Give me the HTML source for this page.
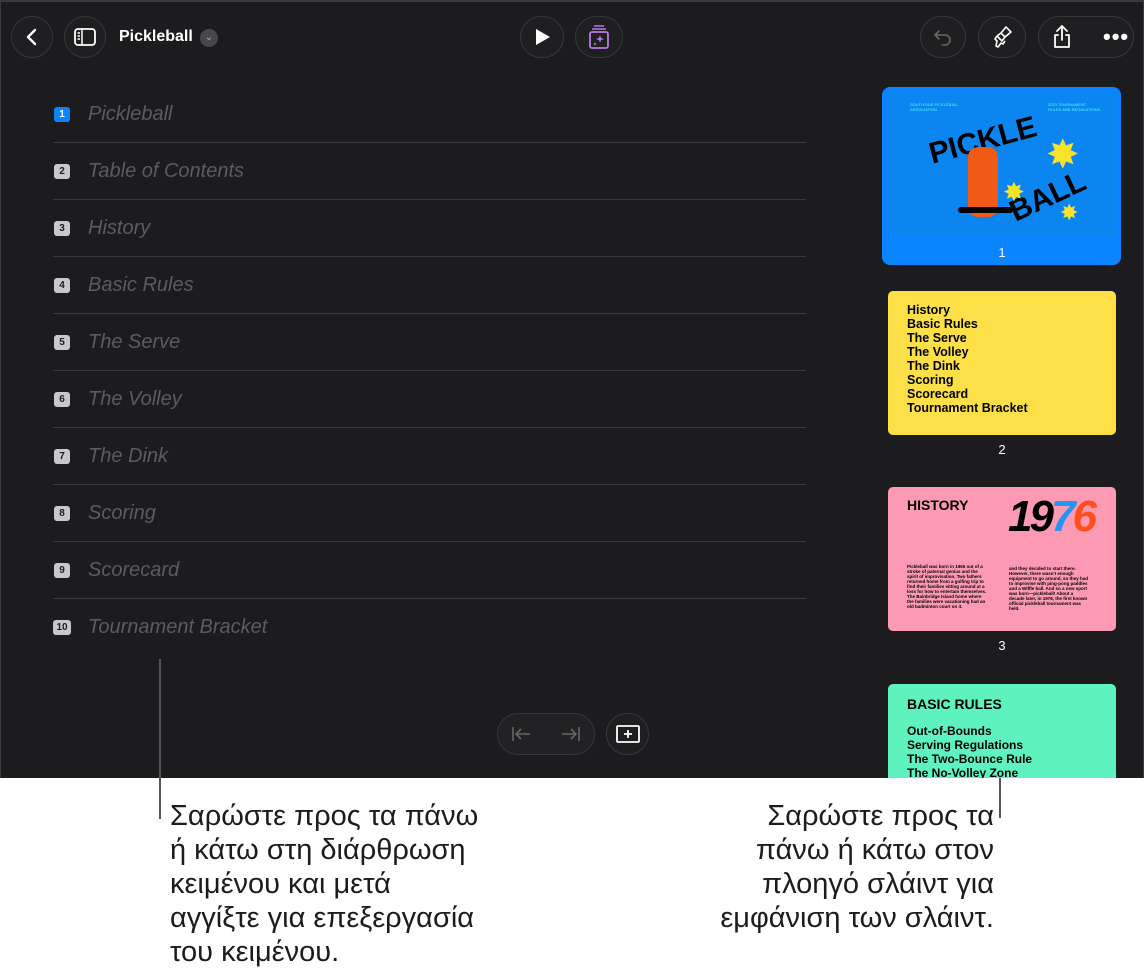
<!DOCTYPE html>
<html><head><meta charset="utf-8"><style>
*{margin:0;padding:0;box-sizing:border-box}
body{width:1144px;height:979px;background:#fff;position:relative;overflow:hidden;font-family:"Liberation Sans",sans-serif}
.scr{position:absolute;left:0;top:0;width:1144px;height:778px;background:#1c1c1e;border-top:2px solid #3a3a3c;border-left:1px solid #3a3a3c;border-right:1px solid #3a3a3c;overflow:hidden}
.btn{position:absolute;height:42px;border-radius:21px;background:#1f1f21;border:1px solid #38383a;display:flex;align-items:center;justify-content:center}
.row{position:absolute;left:52px;width:753px;height:57px;border-bottom:1px solid #3a3a3c}
.bd{position:absolute;left:1px;top:21px;width:16px;height:15px;border-radius:3px;background:#c7c7cc;color:#1c1c1e;font-size:10px;font-weight:bold;text-align:center;line-height:15px}
.rt{position:absolute;left:35px;top:17px;font-size:20px;font-style:italic;color:#5b5b60}
.sl{position:absolute;left:887px;width:228px;height:144px;border-radius:5px;overflow:hidden}
.num{position:absolute;width:228px;left:887px;text-align:center;color:#fff;font-size:13px}
.cap{position:absolute;font-size:29px;line-height:34px;color:#1c1c1e;font-family:"Liberation Sans","DejaVu Sans",sans-serif;white-space:nowrap}
.ln{position:absolute;width:2px;background:#555}
</style></head><body>
<div class="scr">
<div class="btn" style="left:10px;top:14px;width:42px"><svg width="20" height="20" viewBox="0 0 20 20"><path d="M13 3 6 10l7 7" fill="none" stroke="#fff" stroke-width="2.4" stroke-linecap="round" stroke-linejoin="round"/></svg></div>
<div class="btn" style="left:63px;top:14px;width:42px"><svg width="24" height="20" viewBox="0 0 24 20"><rect x="2" y="2" width="20" height="16" rx="3" fill="none" stroke="#fff" stroke-width="1.8"/><path d="M9 2v16M4.5 6h2.5M4.5 9h2.5M4.5 12h2.5" stroke="#fff" stroke-width="1.5"/></svg></div>
<div style="position:absolute;left:118px;top:26px;color:#fff;font-weight:bold;font-size:16px">Pickleball</div>
<div style="position:absolute;left:199px;top:27px;width:18px;height:18px;border-radius:9px;background:#48484a;color:#aaa;font-size:10px;text-align:center;line-height:18px">⌄</div>
<div class="btn" style="left:519px;top:14px;width:44px"><svg width="18" height="20" viewBox="0 0 18 20"><path d="M3 2v16l14-8z" fill="#fff"/></svg></div>
<div class="btn" style="left:574px;top:14px;width:48px"><svg width="22" height="26" viewBox="0 0 22 26"><path d="M6 2h10M4 5h14" stroke="#b57be6" stroke-width="1.4"/><rect x="2" y="8" width="18" height="16" rx="2" fill="none" stroke="#b57be6" stroke-width="1.8"/><path d="M12 11l1 3 3 1-3 1-1 3-1-3-3-1 3-1z M7 18l.5 1.5 1.5.5-1.5.5L7 22l-.5-1.5L5 20l1.5-.5z" fill="#b57be6"/></svg></div>
<div class="btn" style="left:919px;top:14px;width:46px"><svg width="22" height="20" viewBox="0 0 22 20"><path d="M7 4 3 8l4 4M3 8h10a5 5 0 0 1 0 10h-3" fill="none" stroke="#666" stroke-width="1.6" stroke-linecap="round"/></svg></div>
<div class="btn" style="left:977px;top:14px;width:48px"><svg width="22" height="24" viewBox="0 0 22 24"><path d="M15 2l5 5-6 5-4-4z M10 8l-4 3 5 5 3-4 M6 11l-2 3 2 2-1 5 2 1 3-4 2 1 2-3" fill="none" stroke="#fff" stroke-width="1.6" stroke-linejoin="round"/></svg></div>
<div class="btn" style="left:1037px;top:14px;width:96px;justify-content:flex-start;padding-left:12px"><svg width="22" height="26" viewBox="0 0 22 26"><path d="M11 2v14M6 7l5-5 5 5M7 11H4v12h14V11h-3" fill="none" stroke="#fff" stroke-width="1.8" stroke-linecap="round" stroke-linejoin="round"/></svg><span style="margin-left:30px;color:#fff;font-size:22px;letter-spacing:1px;font-weight:bold;line-height:10px">•••</span></div>

<div class="row" style="top:84px"><div class="bd" style="background:#0a84ff;color:#fff">1</div><div class="rt">Pickleball</div></div>
<div class="row" style="top:141px"><div class="bd">2</div><div class="rt">Table of Contents</div></div>
<div class="row" style="top:198px"><div class="bd">3</div><div class="rt">History</div></div>
<div class="row" style="top:255px"><div class="bd">4</div><div class="rt">Basic Rules</div></div>
<div class="row" style="top:312px"><div class="bd">5</div><div class="rt">The Serve</div></div>
<div class="row" style="top:369px"><div class="bd">6</div><div class="rt">The Volley</div></div>
<div class="row" style="top:426px"><div class="bd">7</div><div class="rt">The Dink</div></div>
<div class="row" style="top:483px"><div class="bd">8</div><div class="rt">Scoring</div></div>
<div class="row" style="top:540px"><div class="bd">9</div><div class="rt">Scorecard</div></div>
<div class="row" style="top:597px;border:none"><div class="bd" style="width:18px;left:0">10</div><div class="rt">Tournament Bracket</div></div>

<div class="btn" style="left:496px;top:711px;width:98px;justify-content:space-between;padding:0 12px;background:#222224"><svg width="24" height="18" viewBox="0 0 24 18"><path d="M3 2v14M20 9H6M11 4 6 9l5 5" fill="none" stroke="#666" stroke-width="1.6"/></svg><svg width="24" height="18" viewBox="0 0 24 18"><path d="M21 2v14M4 9h14M13 4l5 5-5 5" fill="none" stroke="#666" stroke-width="1.6"/></svg></div>
<div class="btn" style="left:605px;top:711px;width:43px"><svg width="26" height="22" viewBox="0 0 26 22"><rect x="2" y="3" width="22" height="16" rx="1" fill="none" stroke="#fff" stroke-width="1.8"/><path d="M13 7v8M9 11h8" stroke="#fff" stroke-width="1.8"/></svg></div>

<div style="position:absolute;left:881px;top:85px;width:239px;height:178px;border-radius:8px;background:#0a84ff"></div>
<div class="sl" style="top:90px;background:#0b86f0">
<div style="position:absolute;left:22px;top:10px;font-size:4px;color:#5ff">SOUTHSIDE PICKLEBALL<br>ASSOCIATION</div>
<div style="position:absolute;left:160px;top:10px;font-size:4px;color:#5ff">2023 TOURNAMENT<br>RULES AND REGULATIONS</div>
<div style="position:absolute;left:40px;top:32px;font-size:30px;font-weight:900;color:#000;transform:rotate(-15deg)">PICKLE</div>
<div style="position:absolute;left:120px;top:88px;font-size:30px;font-weight:900;color:#000;transform:rotate(-25deg)">BALL</div>
<div style="position:absolute;left:80px;top:55px;width:30px;height:70px;background:#f05a14;border-radius:10px"></div>
<div style="position:absolute;left:70px;top:115px;width:55px;height:6px;background:#000;border-radius:3px"></div>
<div style="position:absolute;left:158px;top:43px;color:#f7e32a;font-size:40px;line-height:40px">✸</div>
<div style="position:absolute;left:115px;top:85px;color:#f7e32a;font-size:26px">✸</div>
<div style="position:absolute;left:172px;top:108px;color:#f7e32a;font-size:22px">✸</div>
</div>
<div class="num" style="top:243px">1</div>
<div class="sl" style="top:289px;background:#fde047;padding:12px 19px;font-weight:bold;font-size:12.5px;line-height:14px;color:#000">History<br>Basic Rules<br>The Serve<br>The Volley<br>The Dink<br>Scoring<br>Scorecard<br>Tournament Bracket</div>
<div class="num" style="top:440px">2</div>
<div class="sl" style="top:485px;background:#fd99b3">
<div style="position:absolute;left:19px;top:10px;font-weight:bold;font-size:14px">HISTORY</div>
<div style="position:absolute;left:120px;top:6px;font-weight:900;font-style:italic;font-size:44px;line-height:48px;letter-spacing:-3px"><span>19</span><span style="color:#2196f3">7</span><span style="color:#ff4f1a">6</span></div>
<div style="position:absolute;left:19px;top:77px;width:80px;font-size:4.5px;line-height:5px;font-weight:bold">Pickleball was born in 1965 out of a stroke of paternal genius and the spirit of improvisation. Two fathers returned home from a golfing trip to find their families sitting around at a loss for how to entertain themselves. The Bainbridge Island home where the families were vacationing had an old badminton court on it.</div>
<div style="position:absolute;left:121px;top:79px;width:80px;font-size:4.5px;line-height:5px;font-weight:bold">and they decided to start there. However, there wasn't enough equipment to go around, so they had to improvise with ping-pong paddles and a Wiffle ball. And so a new sport was born—pickleball! About a decade later, in 1976, the first known official pickleball tournament was held.</div>
</div>
<div class="num" style="top:636px">3</div>
<div class="sl" style="top:682px;background:#5ef2bf;padding:12px 19px;font-weight:bold;color:#000">
<div style="font-size:14px;margin-bottom:12px">BASIC RULES</div>
<div style="font-size:12px;line-height:14px">Out-of-Bounds<br>Serving Regulations<br>The Two-Bounce Rule<br>The No-Volley Zone</div></div>
</div>
<div class="ln" style="left:159px;top:659px;height:160px"></div>
<div class="ln" style="left:999px;top:778px;height:40px"></div>
<div class="cap" style="left:170px;top:799px">Σαρώστε προς τα πάνω<br>ή κάτω στη διάρθρωση<br>κειμένου και μετά<br>αγγίξτε για επεξεργασία<br>του κειμένου.</div>
<div class="cap" style="right:150px;top:799px;text-align:right">Σαρώστε προς τα<br>πάνω ή κάτω στον<br>πλοηγό σλάιντ για<br>εμφάνιση των σλάιντ.</div>
</body></html>
